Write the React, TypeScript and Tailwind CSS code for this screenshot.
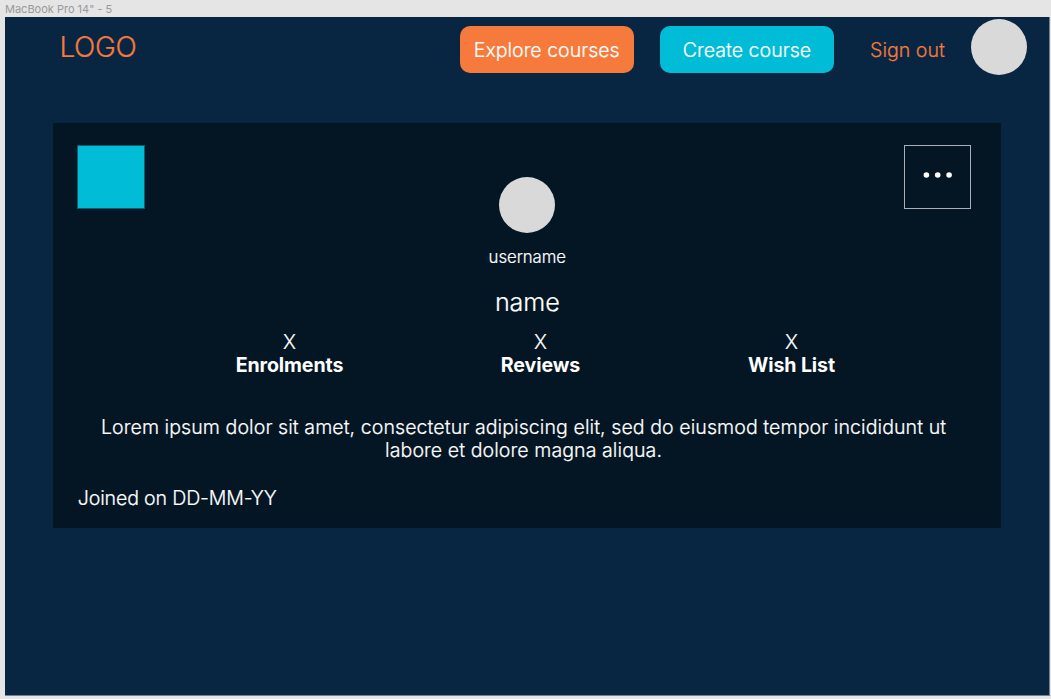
const stats = ["Enrolments", "Reviews", "Wish List"];

export default function App() {
  return (
    <div className="flex h-[699px] w-[1051px] flex-col overflow-hidden bg-[#e5e5e5] pl-[5px] pr-px font-['Inter',sans-serif] font-light text-white">
      <div className="h-[17px] shrink-0 whitespace-nowrap text-[11px] font-normal leading-[18px] text-[#999999]">MacBook Pro 14" - 5</div>
      <main className="h-[679px] shrink-0 border-b border-r border-[#738292] bg-[#082642] [-webkit-text-stroke:0.2px]">
        <header className="flex h-[106px] items-start pl-[54.5px]">
          <div className="w-[400px] shrink-0 pt-[12px] text-[28px] leading-[36px] tracking-[-0.4px] text-[#f67a3c]">LOGO</div>
          <button className="mt-[9px] h-[47px] w-[174.5px] shrink-0 rounded-[10px] bg-[#f67a3c] pt-px text-[19.6px] leading-[24px] tracking-[-0.03px]">Explore courses</button>
          <button className="ml-[26px] mt-[9px] h-[47px] w-[174px] shrink-0 rounded-[10px] bg-[#00bcd7] pt-px text-[19.6px] leading-[24px]">Create course</button>
          <a className="ml-[36px] w-[101px] shrink-0 whitespace-nowrap pt-[21px] text-[19.6px] leading-[24px] text-[#f67a3c]">Sign out</a>
          <div className="mt-[2px] size-[56px] shrink-0 rounded-full bg-[#d9d9d9]" />
        </header>
        <section className="ml-[48.3px] flex h-[404.6px] w-[948px] flex-col bg-[#041624]">
          <div className="flex h-[122px] items-start pl-[24px] pt-[22.4px]">
            <div className="h-[64px] w-[68px] border border-[#04606f] bg-[#00bcd7]" />
            <div className="ml-[353.7px] mt-[32px] size-[56px] rounded-full bg-[#d9d9d9]" />
            <button className="ml-[349px] flex h-[63.5px] w-[67px] justify-center border border-[#a9afb5] pl-px pt-[25px]">
              <svg className="block" width="30" height="8" viewBox="0 0 30 8" fill="white"><circle cx="3.4" cy="4" r="2.8" /><circle cx="14.7" cy="4" r="2.8" /><circle cx="26.1" cy="4" r="2.8" /></svg>
            </button>
          </div>
          <div className="text-center text-[16.8px] leading-[24px] tracking-[-0.07px]">username</div>
          <div className="mt-[17px] text-center text-[25.2px] leading-[32px] tracking-[-0.1px]">name</div>
          <div className="mt-[13px] grid grid-cols-[251px_251px_251px] pl-[110.7px] text-center text-[19.6px]">
            {stats.map((label) => (
              <div key={label}><div className="leading-[23.7px]">X</div><div className="-mt-[0.6px] font-bold leading-[23.7px] tracking-[-0.1px] [-webkit-text-stroke:0]">{label}</div></div>
            ))}
          </div>
          <p className="mt-[37.8px] whitespace-nowrap pr-[7.5px] text-center text-[19.6px] leading-[23.7px] tracking-[0.055px]">
            Lorem ipsum dolor sit amet, consectetur adipiscing elit, sed do eiusmod tempor incididunt ut<br />labore et dolore magna aliqua.
          </p>
          <div className="mt-[23px] pl-[24.5px] text-[19.6px] leading-[24px] tracking-[-0.17px]">Joined on DD-MM-YY</div>
        </section>
      </main>
    </div>
  );
}
